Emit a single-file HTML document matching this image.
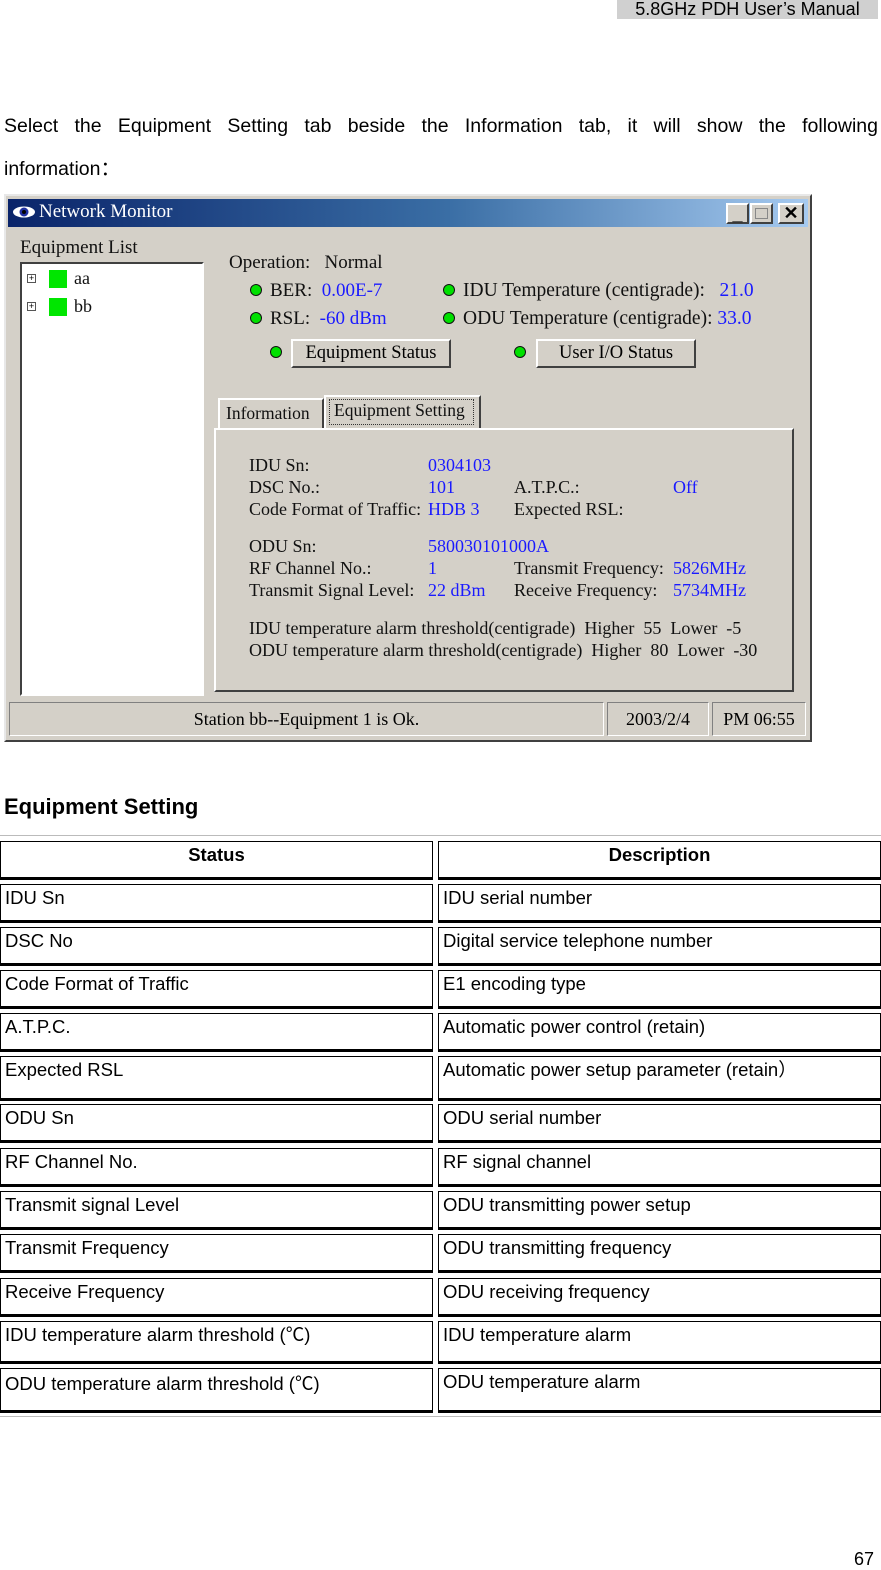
<!DOCTYPE html>
<html><head><meta charset="utf-8"><style>
*{margin:0;padding:0;box-sizing:border-box}
body{width:881px;height:1568px;position:relative;background:#fff;font-family:"Liberation Sans","Noto Sans CJK SC",sans-serif;color:#000;overflow:hidden}
.a{position:absolute;white-space:nowrap}
.w{font-family:"Liberation Serif",serif;font-size:18px;color:#111}
.b{color:#1a1aff}
.dot{position:absolute;width:12px;height:12px;border-radius:50%;background:#00e000;border:1.5px solid #111}
.btn{position:absolute;background:#d4d0c8;border:2px solid;border-color:#fff #404040 #404040 #fff;font-family:"Liberation Serif",serif;font-size:18px;text-align:center;line-height:24px}
.c{position:absolute;border:1px solid #000;border-bottom:3px solid #000;font-size:18.5px;padding:2px 0 0 4px;line-height:22px}
.tb{position:absolute;background:#d4d0c8;border:1px solid;border-color:#808080 #fff #fff #808080;font-family:"Liberation Serif",serif;font-size:18px;line-height:32px;text-align:center}
</style></head><body>
<div class="a" style="left:617px;top:0;width:261px;height:19px;background:#d0d0d0;font-size:18px;line-height:18px;text-align:center">5.8GHz PDH User’s Manual</div>
<div class="a" style="left:4px;top:115px;width:874px;font-size:19.5px;text-align:justify;text-align-last:justify;white-space:normal">Select the Equipment Setting tab beside the Information tab, it will show the following</div>
<div class="a" style="left:4px;top:152px;font-size:19.5px">information：</div>

<div class="a" style="left:4px;top:194px;width:808px;height:548px;background:#d4d0c8;border:2px solid;border-color:#e8e8e8 #404040 #404040 #e8e8e8"></div>
<div class="a" style="left:8px;top:199px;width:800px;height:28px;background:linear-gradient(90deg,#0a246a,#3a6ea5 55%,#a6caf0)"></div>
<svg class="a" style="left:12px;top:205px" width="24" height="14"><ellipse cx="12" cy="7" rx="11" ry="5.5" fill="#fff"/><circle cx="12" cy="7" r="4.5" fill="#2030a0"/><circle cx="12" cy="7" r="2" fill="#000"/></svg>
<div class="a w" style="left:39px;top:201px;color:#fff;font-size:19px">Network Monitor</div>
<div class="btn" style="left:726px;top:203px;width:23px;height:21px;line-height:18px;font-weight:bold;font-family:'Liberation Sans'">_</div>
<div class="btn" style="left:750px;top:203px;width:23px;height:21px"><div style="width:13px;height:11px;border:1px solid #888;margin:3px auto"></div></div>
<div class="btn" style="left:778px;top:203px;width:26px;height:21px;line-height:17px;font-weight:bold;font-family:'Liberation Sans'">✕</div>

<div class="a w" style="left:20px;top:237px;font-size:19px">Equipment List</div>
<div class="a" style="left:20px;top:262px;width:184px;height:434px;background:#fff;border:2px solid;border-color:#404040 #fff #fff #404040"></div>
<div class="a" style="left:27px;top:274px;width:9px;height:9px;border:1px solid #555;font-size:9px;line-height:7px;text-align:center">+</div>
<div class="a" style="left:27px;top:302px;width:9px;height:9px;border:1px solid #555;font-size:9px;line-height:7px;text-align:center">+</div>
<div class="a" style="left:49px;top:270px;width:18px;height:18px;background:#00e600"></div>
<div class="a" style="left:49px;top:298px;width:18px;height:18px;background:#00e600"></div>
<div class="a w" style="left:74px;top:268px">aa</div>
<div class="a w" style="left:74px;top:296px">bb</div>

<div class="a w" style="left:229px;top:252px;font-size:19px">Operation: &nbsp;&nbsp;Normal</div>
<div class="dot" style="left:250px;top:284px"></div><div class="a w" style="left:270px;top:280px;font-size:19px">BER: &nbsp;<span class="b">0.00E-7</span></div>
<div class="dot" style="left:250px;top:312px"></div><div class="a w" style="left:270px;top:308px;font-size:19px">RSL: &nbsp;<span class="b">-60 dBm</span></div>
<div class="dot" style="left:443px;top:284px"></div><div class="a w" style="left:463px;top:280px;font-size:19.5px">IDU Temperature (centigrade): &nbsp;&nbsp;<span class="b">21.0</span></div>
<div class="dot" style="left:443px;top:312px"></div><div class="a w" style="left:463px;top:308px;font-size:19.5px">ODU Temperature (centigrade): <span class="b">33.0</span></div>
<div class="dot" style="left:270px;top:346px"></div>
<div class="btn" style="left:291px;top:339px;width:160px;height:29px;font-size:18.5px">Equipment Status</div>
<div class="dot" style="left:514px;top:346px"></div>
<div class="btn" style="left:536px;top:339px;width:160px;height:29px;font-size:18.5px">User I/O Status</div>

<div class="a" style="left:218px;top:398px;width:106px;height:30px;border:2px solid;border-bottom:0;border-color:#fff #404040 #404040 #fff"></div>
<div class="a w" style="left:226px;top:403px;font-size:17.5px">Information</div>
<div class="a" style="left:324px;top:395px;width:157px;height:35px;border:2px solid;border-bottom:0;border-color:#fff #404040 #404040 #fff;background:#d4d0c8"></div>
<div class="a" style="left:329px;top:399px;width:145px;height:26px;border:1px dotted #333"></div>
<div class="a w" style="left:334px;top:400px;font-size:17.5px">Equipment Setting</div>
<div class="a" style="left:214px;top:428px;width:580px;height:264px;border:2px solid;border-color:#fff #404040 #404040 #fff"></div>
<div class="a" style="left:482px;top:428px;width:310px;height:2px;background:#fff"></div>

<div class="a w" style="left:249px;top:455px">IDU Sn:</div><div class="a w b" style="left:428px;top:455px">0304103</div>
<div class="a w" style="left:249px;top:477px">DSC No.:</div><div class="a w b" style="left:428px;top:477px">101</div>
<div class="a w" style="left:514px;top:477px">A.T.P.C.:</div><div class="a w b" style="left:673px;top:477px">Off</div>
<div class="a w" style="left:249px;top:499px">Code Format of Traffic:</div><div class="a w b" style="left:428px;top:499px">HDB 3</div>
<div class="a w" style="left:514px;top:499px">Expected RSL:</div>
<div class="a w" style="left:249px;top:536px">ODU Sn:</div><div class="a w b" style="left:428px;top:536px">580030101000A</div>
<div class="a w" style="left:249px;top:558px">RF Channel No.:</div><div class="a w b" style="left:428px;top:558px">1</div>
<div class="a w" style="left:514px;top:558px">Transmit Frequency:</div><div class="a w b" style="left:673px;top:558px">5826MHz</div>
<div class="a w" style="left:249px;top:580px">Transmit Signal Level:</div><div class="a w b" style="left:428px;top:580px">22 dBm</div>
<div class="a w" style="left:514px;top:580px">Receive Frequency:</div><div class="a w b" style="left:673px;top:580px">5734MHz</div>
<div class="a w" style="left:249px;top:618px">IDU temperature alarm threshold(centigrade) &nbsp;Higher &nbsp;55 &nbsp;Lower &nbsp;-5</div>
<div class="a w" style="left:249px;top:640px">ODU temperature alarm threshold(centigrade) &nbsp;Higher &nbsp;80 &nbsp;Lower &nbsp;-30</div>

<div class="tb" style="left:9px;top:702px;width:595px;height:34px">Station bb--Equipment 1 is Ok.</div>
<div class="tb" style="left:607px;top:702px;width:102px;height:34px">2003/2/4</div>
<div class="tb" style="left:712px;top:702px;width:94px;height:34px">PM 06:55</div>

<div class="a" style="left:4px;top:794px;font-size:22px;font-weight:bold">Equipment Setting</div>
<div class="a" style="left:0;top:835px;width:881px;height:1px;background:#bbb"></div>
<div class="a" style="left:0;top:1416px;width:881px;height:1px;background:#bbb"></div>

<div class="c" style="left:0;top:841px;width:433px;height:39px;text-align:center;font-weight:bold;padding-left:0">Status</div>
<div class="c" style="left:438px;top:841px;width:443px;height:39px;text-align:center;font-weight:bold;padding-left:0">Description</div>

<div class="c" style="left:0;top:884px;width:433px;height:39px">IDU Sn</div><div class="c" style="left:438px;top:884px;width:443px;height:39px">IDU serial number</div>
<div class="c" style="left:0;top:927px;width:433px;height:39px">DSC No</div><div class="c" style="left:438px;top:927px;width:443px;height:39px">Digital service telephone number</div>
<div class="c" style="left:0;top:970px;width:433px;height:39px">Code Format of Traffic</div><div class="c" style="left:438px;top:970px;width:443px;height:39px">E1 encoding type</div>
<div class="c" style="left:0;top:1013px;width:433px;height:39px">A.T.P.C.</div><div class="c" style="left:438px;top:1013px;width:443px;height:39px">Automatic power control (retain)</div>
<div class="c" style="left:0;top:1056px;width:433px;height:45px">Expected RSL</div><div class="c" style="left:438px;top:1056px;width:443px;height:45px">Automatic power setup parameter (retain）</div>
<div class="c" style="left:0;top:1104px;width:433px;height:39px">ODU Sn</div><div class="c" style="left:438px;top:1104px;width:443px;height:39px">ODU serial number</div>
<div class="c" style="left:0;top:1148px;width:433px;height:39px">RF Channel No.</div><div class="c" style="left:438px;top:1148px;width:443px;height:39px">RF signal channel</div>
<div class="c" style="left:0;top:1191px;width:433px;height:39px">Transmit signal Level</div><div class="c" style="left:438px;top:1191px;width:443px;height:39px">ODU transmitting power setup</div>
<div class="c" style="left:0;top:1234px;width:433px;height:39px">Transmit Frequency</div><div class="c" style="left:438px;top:1234px;width:443px;height:39px">ODU transmitting frequency</div>
<div class="c" style="left:0;top:1278px;width:433px;height:39px">Receive Frequency</div><div class="c" style="left:438px;top:1278px;width:443px;height:39px">ODU receiving frequency</div>
<div class="c" style="left:0;top:1321px;width:433px;height:43px">IDU temperature alarm threshold (℃)</div><div class="c" style="left:438px;top:1321px;width:443px;height:43px">IDU temperature alarm</div>
<div class="c" style="left:0;top:1368px;width:433px;height:45px;padding-top:4px">ODU temperature alarm threshold (℃)</div><div class="c" style="left:438px;top:1368px;width:443px;height:45px">ODU temperature alarm</div>

<div class="a" style="left:854px;top:1549px;font-size:18px">67</div>
</body></html>
